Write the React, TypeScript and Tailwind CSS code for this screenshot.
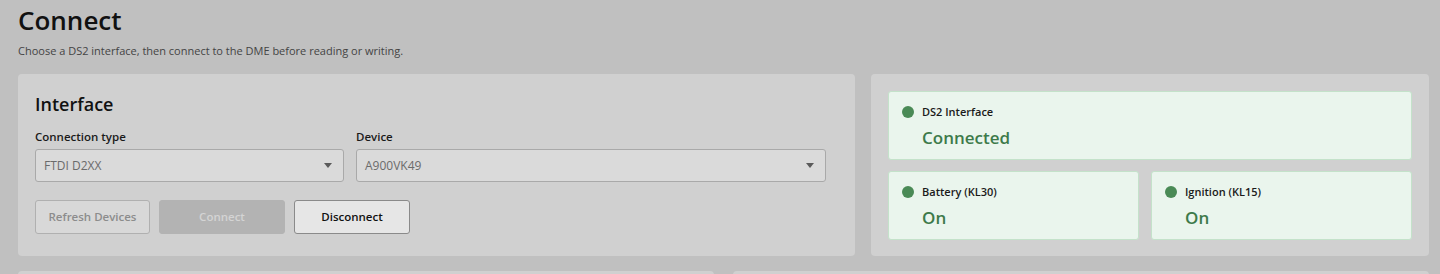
import React from 'react';

const font = { fontFamily: '"Open Sans", "Noto Sans", sans-serif' };

const Select: React.FC<{ value: string }> = ({ value }) => (
  <div className="flex h-[33px] items-center justify-between rounded-[3px] border border-[#a9a9a9] bg-[#dadada] pl-[8px] pr-[11px] text-[12px] text-[#6b6b6b]">
    <span>{value}</span>
    <svg width="8" height="5" viewBox="0 0 8 5">
      <path d="M0 0h8L4 5z" fill="#5a5a5a" />
    </svg>
  </div>
);

const StatusCard: React.FC<{ label: string; value: string }> = ({ label, value }) => (
  <div className="flex h-[69px] flex-col rounded-[3px] border border-[#c4e2ca] bg-[#eaf5ed] pl-[13px] pt-[12px]">
    <div className="flex items-center gap-[8px]">
      <span className="h-[12px] w-[12px] shrink-0 rounded-full bg-[#4a8a56]" />
      <span className="text-[11px] font-semibold text-[#1a1a1a]">{label}</span>
    </div>
    <div className="mt-[5px] pl-[20px] text-[17px] font-semibold leading-[24px] text-[#3d7a4a]">{value}</div>
  </div>
);

export default function App() {
  return (
    <div className="h-[274px] w-full overflow-hidden bg-[#c0c0c0] pl-[18px] pr-[11px] pt-[4px]" style={font}>
      <h1 className="text-[26px] font-semibold leading-[32px] text-[#111]">Connect</h1>
      <p className="mt-[7px] text-[11px] leading-[16px] text-[#444]">
        Choose a DS2 interface, then connect to the DME before reading or writing.
      </p>

      <div className="mt-[15px] grid grid-cols-[3fr_2fr] gap-[16px]">
        {/* Interface panel */}
        <div className="h-[182px] rounded-[4px] bg-[#d0d0d0] px-[17px] pt-[18px]">
          <h2 className="text-[18px] font-semibold leading-[24px] text-[#111]">Interface</h2>
          <div className="mt-[13px] grid grid-cols-[309px_1fr] gap-x-[12px] pr-[12px]">
            <div>
              <div className="mb-[4px] text-[11.5px] font-semibold leading-[16px] text-[#1a1a1a]">Connection type</div>
              <Select value="FTDI D2XX" />
            </div>
            <div>
              <div className="mb-[4px] text-[11.5px] font-semibold leading-[16px] text-[#1a1a1a]">Device</div>
              <Select value="A900VK49" />
            </div>
          </div>
          <div className="mt-[18px] flex gap-[9px]">
            <button className="h-[34px] w-[115px] rounded-[3px] border border-[#b0b0b0] bg-[#d8d8d8] text-[11.5px] font-semibold text-[#8c8c8c]">
              Refresh Devices
            </button>
            <button className="h-[34px] w-[126px] rounded-[3px] border border-[#b3b3b3] bg-[#b3b3b3] text-[11.5px] font-semibold text-[#d4d4d4]">
              Connect
            </button>
            <button className="h-[34px] w-[116px] rounded-[3px] border border-[#8a8a8a] bg-[#e6e6e6] text-[11.5px] font-semibold text-[#111]">
              Disconnect
            </button>
          </div>
        </div>

        {/* Status panel */}
        <div className="h-[182px] rounded-[4px] bg-[#d0d0d0] px-[17px] pt-[17px]">
          <StatusCard label="DS2 Interface" value="Connected" />
          <div className="mt-[11px] grid grid-cols-[251fr_261fr] gap-[12px]">
            <StatusCard label="Battery (KL30)" value="On" />
            <StatusCard label="Ignition (KL15)" value="On" />
          </div>
        </div>
      </div>

      <div className="mt-[15px] grid grid-cols-[696px_1fr] gap-[19px]">
        <div className="h-[20px] rounded-[4px] bg-[#d0d0d0]" />
        <div className="h-[20px] rounded-[4px] bg-[#d0d0d0]" />
      </div>
    </div>
  );
}
